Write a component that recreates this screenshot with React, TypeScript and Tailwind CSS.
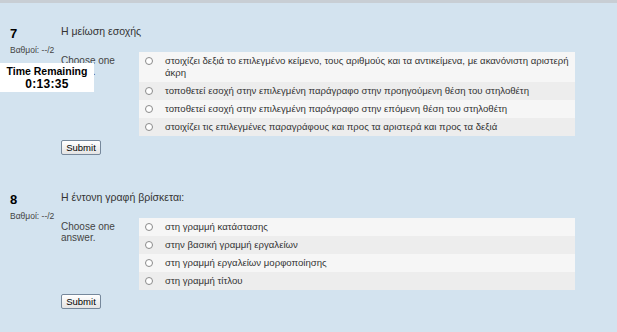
const font = { fontFamily: '"Liberation Sans", Arial, sans-serif' };

type Question = {
  num: string;
  text: string;
  answers: string[];
};

const questions: Question[] = [
  {
    num: "7",
    text: "Η μείωση εσοχής",
    answers: [
      "στοιχίζει δεξιά το επιλεγμένο κείμενο, τους αριθμούς και τα αντικείμενα, με ακανόνιστη αριστερή άκρη",
      "τοποθετεί εσοχή στην επιλεγμένη παράγραφο στην προηγούμενη θέση του στηλοθέτη",
      "τοποθετεί εσοχή στην επιλεγμένη παράγραφο στην επόμενη θέση του στηλοθέτη",
      "στοιχίζει τις επιλεγμένες παραγράφους και προς τα αριστερά και προς τα δεξιά",
    ],
  },
  {
    num: "8",
    text: "Η έντονη γραφή βρίσκεται:",
    answers: [
      "στη γραμμή κατάστασης",
      "στην βασική γραμμή εργαλείων",
      "στη γραμμή εργαλείων μορφοποίησης",
      "στη γραμμή τίτλου",
    ],
  },
];

function QuestionBlock({ q }: { q: Question }) {
  return (
    <div className="flex">
      <div className="w-[61px] shrink-0 pl-[10px]">
        <div className="text-[13px] leading-[13px] font-bold text-black mt-[2px]">{q.num}</div>
        <div className="text-[8.5px] leading-[10px] text-[#444] mt-[5px]">Βαθμοί: --/2</div>
      </div>
      <div className="flex flex-col">
        <div className="text-[10.5px] leading-[12px] text-[#333]">{q.text}</div>
        <div className="flex mt-[15px]">
          <div className="w-[78px] shrink-0 pt-[3px] text-[10px] leading-[11px] text-[#444]">
            Choose one
            <br />
            answer.
          </div>
          <div className="w-[436px] flex flex-col">
            {q.answers.map((a, i) => (
              <div
                key={i}
                className={
                  "flex items-start py-[3px] pr-[6px] " +
                  (i % 2 === 0 ? "bg-[#f6f6f6]" : "bg-[#ededed]")
                }
              >
                <span className="w-[8px] h-[8px] mt-[2px] ml-[6px] mr-[12px] rounded-full border border-[#8a8a8a] bg-white shrink-0" />
                <span className="text-[9.6px] leading-[12px] text-[#333]">{a}</span>
              </div>
            ))}
          </div>
        </div>
        <button className="block mt-[4px] w-[40px] h-[15px] text-[9.5px] leading-[12px] text-black border border-[#76889b] rounded-[2px] bg-gradient-to-b from-white to-[#e4e4e4]">
          Submit
        </button>
      </div>
    </div>
  );
}

export default function App() {
  return (
    <div className="relative w-[617px] h-[332px] overflow-hidden bg-[#d3e3ef] border-t-[3px] border-[#c8ced4]" style={font}>
      <div className="pt-[22px] flex flex-col gap-[36px]">
        {questions.map((q) => (
          <QuestionBlock key={q.num} q={q} />
        ))}
      </div>
      <div className="absolute left-0 top-[60px] w-[94px] h-[29px] bg-white flex flex-col items-center justify-center">
        <div className="text-[10.5px] leading-[12px] font-bold text-black">Time Remaining</div>
        <div className="text-[12px] leading-[14px] font-bold text-black tracking-[0.3px]">0:13:35</div>
      </div>
    </div>
  );
}
